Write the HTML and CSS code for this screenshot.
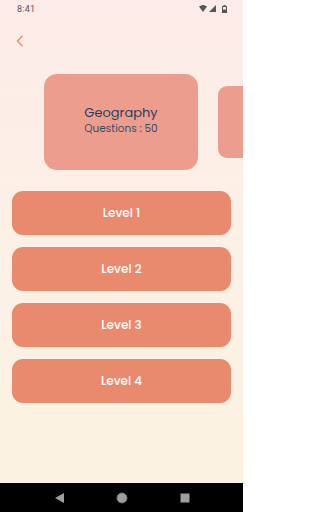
FILE: index.html
```html
<!DOCTYPE html>
<html>
<head>
<meta charset="utf-8">
<link rel="stylesheet" href="styles.css">
</head>
<body>
<div class="screen">
  <div class="status">
    <span class="time">8:41</span>
    <div class="sicons">
      <svg width="8" height="7" viewBox="0 0 8 7"><path d="M0 1.5 Q4 -1.5 8 1.5 L4 7 Z" fill="#555"/></svg>
      <svg width="7" height="7" viewBox="0 0 7 7"><path d="M7 0 L7 7 L0 7 Z" fill="#555"/></svg>
      <svg class="bat" width="5" height="8" viewBox="0 0 5 8"><rect x="1.5" y="0" width="2" height="1" fill="#555"/><rect x="0" y="1" width="5" height="7" rx="0.6" fill="#555"/><rect x="1" y="2" width="3" height="2.5" fill="#fbecea"/></svg>
    </div>
  </div>
  <div class="topbar">
    <svg class="back" width="8" height="12" viewBox="0 0 8 12"><path d="M6.5 0.8 L1.5 6 L6.5 11.2" fill="none" stroke="#e9886c" stroke-width="1.3"/></svg>
  </div>
  <div class="carousel">
    <div class="card main">
      <div class="title">Geography</div>
      <div class="sub">Questions : 50</div>
    </div>
    <div class="card next"></div>
  </div>
  <div class="levels">
    <button class="level">Level 1</button>
    <button class="level">Level 2</button>
    <button class="level">Level 3</button>
    <button class="level">Level 4</button>
  </div>
  <div class="spacer"></div>
  <div class="navbar">
    <svg width="12" height="12" viewBox="0 0 12 12"><path d="M11 1 L11 11 L2 6 Z" fill="#9e9e9e"/></svg>
    <svg width="12" height="12" viewBox="0 0 12 12"><circle cx="6" cy="6" r="5" fill="#9e9e9e" stroke="#777" stroke-width="0.8"/></svg>
    <svg width="10" height="10" viewBox="0 0 10 10"><rect x="0.5" y="0.5" width="9" height="9" fill="#9e9e9e"/></svg>
  </div>
</div>
</body>
</html>
```
FILE: styles.css
```css
html, body {
  margin: 0;
  padding: 0;
  overflow: hidden;
}
body {
  width: 243px;
  height: 512px;
  font-family: "Poppins", "Inter", "Noto Sans", sans-serif;
}
.screen {
  width: 243px;
  height: 512px;
  overflow: hidden;
  display: flex;
  flex-direction: column;
  background: linear-gradient(to bottom, #fcebe8 0%, #fcf0e6 40%, #fbf3e1 100%);
}
.status {
  height: 17px;
  display: flex;
  align-items: center;
  justify-content: space-between;
  padding: 0 16px 0 17px;
}
.time {
  font-family: "Roboto", sans-serif;
  font-size: 9px;
  color: #555;
  letter-spacing: 0.2px;
}
.sicons {
  display: flex;
  align-items: center;
  gap: 2px;
}
.sicons .bat {
  margin-left: 4px;
}
.topbar {
  height: 40px;
  display: flex;
  align-items: center;
  padding-left: 16px;
  padding-top: 7px;
  box-sizing: border-box;
}
.carousel {
  margin-top: 17px;
  display: flex;
  align-items: center;
  padding-left: 44px;
  gap: 20px;
  height: 96px;
  overflow: hidden;
}
.card {
  background: #ec9d8e;
  border-radius: 13px;
  flex: none;
}
.card.main {
  width: 154px;
  height: 96px;
  display: flex;
  flex-direction: column;
  align-items: center;
  justify-content: center;
  gap: 1px;
  color: #2e3d5c;
  padding-bottom: 4px;
  box-sizing: border-box;
}
.card.next {
  width: 40px;
  height: 72px;
  border-radius: 9px;
}
.title {
  font-size: 13px;
  line-height: 16px;
}
.sub {
  font-size: 10.5px;
  line-height: 14px;
  color: #3d4a66;
}
.levels {
  margin-top: 21px;
  padding: 0 12px;
  display: flex;
  flex-direction: column;
  gap: 12px;
}
.level {
  height: 44px;
  border: none;
  border-radius: 11px;
  background: #e9896d;
  color: #fff;
  font-family: "Poppins", "Inter", sans-serif;
  font-weight: 500;
  font-size: 12px;
  padding: 0;
}
.spacer {
  flex: 1;
}
.navbar {
  height: 29px;
  background: #000;
  display: grid;
  grid-template-columns: 63px 63px 63px;
  justify-content: center;
  align-items: center;
  justify-items: center;
}
```
